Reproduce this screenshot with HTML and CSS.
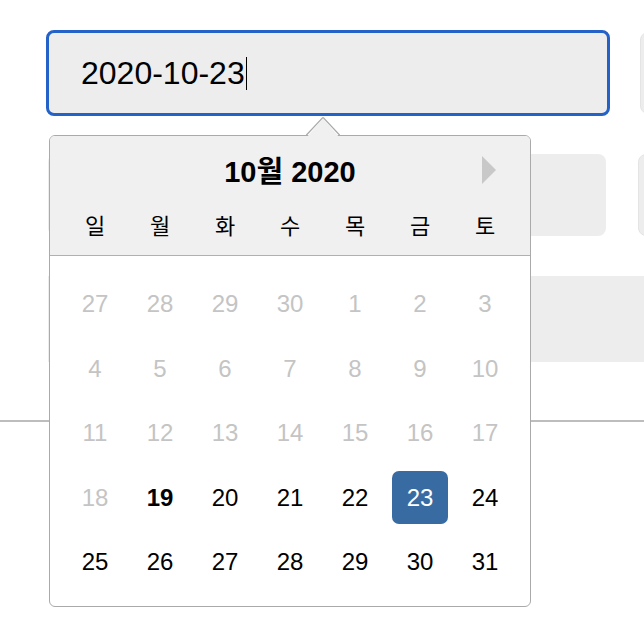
FILE: index.html
```html
<!DOCTYPE html>
<html lang="ko">
<head>
<meta charset="utf-8">
<link rel="stylesheet" href="styles.css">
</head>
<body>
<div class="page">
  <div class="form">
    <div class="row">
      <div class="field focused"><span class="value">2020-10-23</span><span class="caret"></span></div>
      <div class="field side"></div>
    </div>
    <div class="row row2">
      <div class="field narrow"></div>
      <div class="field side"></div>
    </div>
    <div class="bar"></div>
  </div>
  <div class="rule"></div>

  <div class="popup">
    <svg class="pointer" width="34" height="21" viewBox="0 0 34 21">
      <polygon points="0,21 17,1.5 34,21" fill="#f0f0f0"/>
      <polyline points="0,18.5 16.5,0.8 17.5,0.8 34,18.5" fill="none" stroke="#aaaaaa" stroke-width="1.2"/>
    </svg>
    <div class="head">
      <div class="title-row">
        <span class="title">10월 2020</span>
        <span class="next"></span>
      </div>
      <div class="dows">
        <span>일</span><span>월</span><span>화</span><span>수</span><span>목</span><span>금</span><span>토</span>
      </div>
    </div>
    <div class="days">
      <span class="other">27</span><span class="other">28</span><span class="other">29</span><span class="other">30</span><span class="other">1</span><span class="other">2</span><span class="other">3</span>
      <span class="other">4</span><span class="other">5</span><span class="other">6</span><span class="other">7</span><span class="other">8</span><span class="other">9</span><span class="other">10</span>
      <span class="other">11</span><span class="other">12</span><span class="other">13</span><span class="other">14</span><span class="other">15</span><span class="other">16</span><span class="other">17</span>
      <span class="other">18</span><span class="today">19</span><span>20</span><span>21</span><span>22</span><span class="selected">23</span><span>24</span>
      <span>25</span><span>26</span><span>27</span><span>28</span><span>29</span><span>30</span><span>31</span>
    </div>
  </div>
</div>
</body>
</html>
```

FILE: styles.css
```css
html, body {
  margin: 0;
  padding: 0;
  background: #ffffff;
  overflow: hidden;
}
body {
  font-family: "Liberation Sans", "Noto Sans CJK KR", Arial, sans-serif;
  color: #000;
}
.page {
  position: relative;
  width: 644px;
  height: 634px;
  overflow: hidden;
}
.form {
  padding: 32px 0 0 48px;
}
.row {
  display: flex;
  gap: 32px;
}
.row2 {
  margin-top: 40px;
}
.field {
  flex: none;
  width: 560px;
  height: 82px;
  box-sizing: border-box;
  background: #ededed;
  border-radius: 8px;
  display: flex;
  align-items: center;
}
.field.narrow {
  width: 558px;
}
.field.side {
  width: 200px;
  border: 1px solid #e4e4e4;
}
.focused {
  outline: 3px solid #2462c8;
  outline-offset: -1px;
  border-radius: 6px;
  padding-left: 33px;
}
.value {
  font-size: 32px;
  line-height: 1;
}
.caret {
  width: 1.5px;
  height: 33px;
  background: #000;
  margin-left: 1px;
}
.bar {
  margin-top: 40px;
  height: 86px;
  background: #ededed;
  width: 700px;
}
.rule {
  margin-top: 58px;
  height: 2px;
  background: #bdbdbd;
}

.popup {
  position: absolute;
  left: 49px;
  top: 135px;
  width: 482px;
  height: 472px;
  box-sizing: border-box;
  border: 1px solid #aaaaaa;
  border-radius: 6px;
  background: #ffffff;
}
.pointer {
  position: absolute;
  left: 256px;
  top: -19px;
}
.head {
  background: #f0f0f0;
  border-bottom: 1px solid #b0b0b0;
  border-radius: 5px 5px 0 0;
  padding-bottom: 15px;
}
.title-row {
  position: relative;
  height: 72px;
  display: flex;
  align-items: center;
  justify-content: center;
}
.title {
  font-size: 29px;
  font-weight: bold;
  line-height: 1;
}
.next {
  position: absolute;
  right: 34px;
  top: 20px;
  width: 0;
  height: 0;
  border-left: 14px solid #c8c8c8;
  border-top: 14px solid transparent;
  border-bottom: 14px solid transparent;
}
.dows {
  display: grid;
  grid-template-columns: repeat(7, 65px);
  justify-content: center;
  height: 32px;
  align-items: center;
  font-family: "Noto Sans CJK KR", sans-serif;
  font-size: 22px;
  line-height: 1;
}
.dows span,
.days span {
  text-align: center;
}
.days {
  display: grid;
  grid-template-columns: repeat(7, 65px);
  grid-auto-rows: 64.5px;
  justify-content: center;
  align-items: center;
  justify-items: center;
  padding-top: 16px;
  font-size: 24px;
  line-height: 1;
}
.days .other {
  color: #c4c4c4;
}
.days .today {
  font-weight: bold;
}
.days .selected {
  width: 56px;
  height: 53px;
  border-radius: 7px;
  background: #386ba2;
  color: #ffffff;
  display: flex;
  align-items: center;
  justify-content: center;
}
```
